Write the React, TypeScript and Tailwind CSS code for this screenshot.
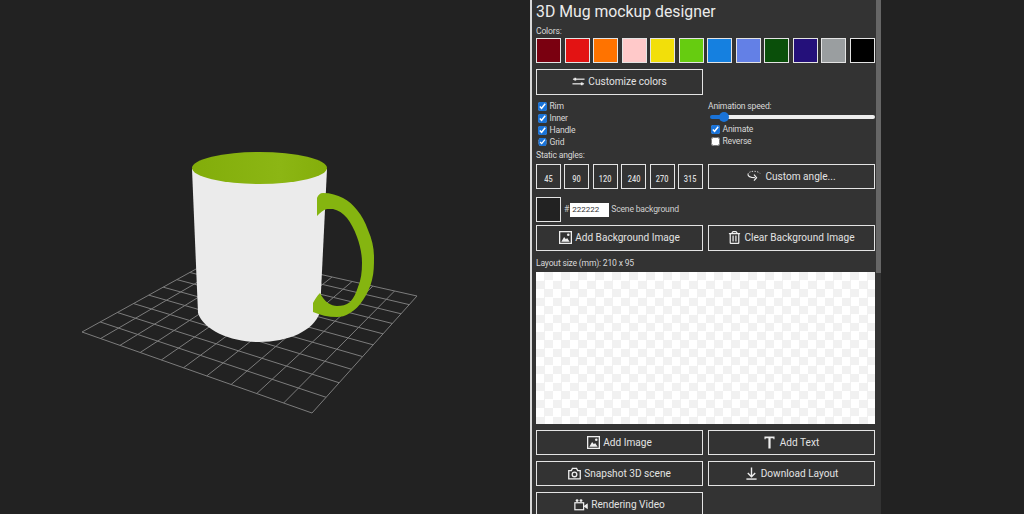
import { FaRegTrashAlt } from 'react-icons/fa';
import type { ReactNode } from 'react';

const swatches = ['#7a0010', '#e31313', '#ff7300', '#ffc9c9', '#f2df0a', '#66cc10', '#1580e0', '#6380e6', '#0a4f0a', '#24107a', '#9a9ea0', '#000000'];
const angles = ['45', '90', '120', '240', '270', '315'];

// back, right, front, left corners of the floor grid
const corners = { tl: [225, 253], tr: [417, 296], br: [312, 413], bl: [82, 332] };

// maps the unit square onto the four corners so the cells shrink with distance
const project = (u: number, v: number) => {
    const { tl, tr, br, bl } = corners;
    const dx1 = tr[0] - br[0];
    const dx2 = bl[0] - br[0];
    const dy1 = tr[1] - br[1];
    const dy2 = bl[1] - br[1];
    const sx = tl[0] - tr[0] + br[0] - bl[0];
    const sy = tl[1] - tr[1] + br[1] - bl[1];
    const det = dx1 * dy2 - dx2 * dy1;
    const g = (sx * dy2 - dx2 * sy) / det;
    const h = (dx1 * sy - sx * dy1) / det;
    const a = tr[0] - tl[0] + g * tr[0];
    const b = bl[0] - tl[0] + h * bl[0];
    const d = tr[1] - tl[1] + g * tr[1];
    const e = bl[1] - tl[1] + h * bl[1];
    const w = g * u + h * v + 1;
    return [(a * u + b * v + tl[0]) / w, (d * u + e * v + tl[1]) / w];
};

const gridLines = Array.from({ length: 11 }, (_, i) => i / 10).flatMap((t) => [
    [project(t, 0), project(t, 1)],
    [project(0, t), project(1, t)],
]);

const Scene = () => (
    <svg viewBox="0 0 530 514" className="block h-[514px] w-[530px] flex-none">
        <defs>
            <linearGradient id="inner" x1="0" x2="1" y1="0" y2="0">
                <stop offset="0" stopColor="#82ad0a" />
                <stop offset="0.65" stopColor="#8cb614" />
                <stop offset="1" stopColor="#84ae0a" />
            </linearGradient>
        </defs>
        {gridLines.map(([p, q], i) => (
            <line key={i} x1={p[0]} y1={p[1]} x2={q[0]} y2={q[1]} stroke="#7c7c7c" strokeWidth="1" />
        ))}
        <path d="M192 169 L198 313 C204 331 232 342 259 342 C288 342 314 331 320 312 L327 169 Z" fill="#ebebeb" />
        <ellipse cx="259.5" cy="168" rx="67.5" ry="16" fill="url(#inner)" />
        <path
            d="M317 198 C318 195 320 193 323 193 C331 193 337 195 343 198 C349 201 353 205 357 210 C362 216 365 222 368 230 C372 239 374 248 374 257 C374 265 374 272 372 280 C370 288 367 294 363 300 C359 306 355 310 350 313 C345 316 341 317 337 317 C328 317 320 315 313 312 L313 303 C315 299 317 296 320 293 C322 297 325 301 328 303 C331 305 334 306 337 306 C342 306 346 305 350 302 C354 298 356 293 358 287 C361 280 362 272 362 263 C362 254 360 245 357 237 C354 229 351 223 347 218 C343 213 338 210 333 209 L327 209 C323 210 320 213 317 216 Z"
            fill="#85b510"
        />
    </svg>
);

const SlidersIcon = () => (
    <svg viewBox="0 0 14 12" className="size-[13px] flex-none" fill="#eeeeee" stroke="#eeeeee" strokeWidth="1.3">
        <path d="M1 3.5H13.5" />
        <rect x="2.5" y="2" width="2" height="3" stroke="none" />
        <path d="M0.5 8.5H13" />
        <rect x="9.5" y="7" width="2" height="3" stroke="none" />
    </svg>
);

const ImageIcon = () => (
    <svg viewBox="0 0 14 14" className="size-[13px] flex-none" fill="none" stroke="#eeeeee" strokeWidth="1.4">
        <rect x="0.7" y="0.7" width="12.6" height="12.6" />
        <path d="M2.5 11.5L5.5 6.5L7.5 9L8.7 7.5L11.5 11.5Z" fill="#eeeeee" stroke="none" />
        <circle cx="10" cy="4" r="1.4" fill="#eeeeee" stroke="none" />
    </svg>
);

const AngleIcon = () => (
    <svg viewBox="0 0 16 14" className="h-[12px] w-[14px] flex-none" fill="none" stroke="#eeeeee" strokeWidth="1.4">
        <path d="M1 5C1 3 4 1.5 8 1.5C11 1.5 14 2.5 15 4" strokeDasharray="1.5 1.5" strokeWidth="1" />
        <path d="M1 5C1 7.5 4 9 9 9" />
        <path d="M8 5.5L11 9L8 12.5" />
    </svg>
);

const TextIcon = () => (
    <svg viewBox="0 0 12 14" className="h-[13px] w-[11px] flex-none" fill="#eeeeee">
        <path d="M0.5 0.5H11.5V3.5H10.2V2.3H7.2V13.5H4.8V2.3H1.8V3.5H0.5Z" />
    </svg>
);

const CameraIcon = () => (
    <svg viewBox="0 0 14 14" className="size-[13px] flex-none" fill="none" stroke="#eeeeee" strokeWidth="1.4">
        <path d="M0.8 3.8H3.6L4.8 1.5H9.2L10.4 3.8H13.2V12.7H0.8Z" />
        <circle cx="7" cy="8" r="2.5" />
    </svg>
);

const DownloadIcon = () => (
    <svg viewBox="0 0 14 14" className="size-[13px] flex-none" fill="none" stroke="#eeeeee" strokeWidth="1.5">
        <path d="M7 0.5V10M3 6.5L7 10.5L11 6.5" />
        <path d="M1.5 13H12.5" />
    </svg>
);

const VideoIcon = () => (
    <svg viewBox="0 0 16 14" className="h-[13px] w-[14px] flex-none" fill="none" stroke="#eeeeee" strokeWidth="1.4">
        <rect x="1" y="5" width="10" height="8" />
        <circle cx="3.5" cy="2.5" r="1.6" fill="#eeeeee" stroke="none" />
        <circle cx="8" cy="2.5" r="1.6" fill="#eeeeee" stroke="none" />
        <path d="M12 9L15 7V11Z" fill="#eeeeee" />
    </svg>
);

const Btn = ({ icon, label, className = 'w-[167px]' }: { icon: ReactNode; label: string; className?: string }) => (
    <button className={`flex h-[25.5px] flex-none items-center justify-center gap-[3px] border-[1.5px] border-[#e4e4e4] text-[10.1px] text-[#e2e2e2] ${className}`}>
        {icon}
        <span>{label}</span>
    </button>
);

const Check = ({ label, checked = true }: { label: string; checked?: boolean }) => (
    <label className="flex h-[12px] items-center gap-[3px] pl-[2px] text-[8.6px] tracking-[-0.2px] text-[#d8d8d8]">
        <input type="checkbox" defaultChecked={checked} className="m-0 size-[8.5px] accent-[#1a73d8]" />
        {label}
    </label>
);

export default function App() {
    return (
        <div className="flex h-[514px] w-[1024px] overflow-hidden bg-[#222222] font-['Roboto',sans-serif]">
            <Scene />
            <div className="h-[514px] w-[1.5px] flex-none bg-[#d8d8d8]" />
            <div className="flex h-[514px] w-[349.5px] flex-none bg-[#333333]">
                <main className="flex w-[344.5px] flex-none flex-col overflow-hidden pl-[4.5px]">
                    <h1 className="mt-[3px] text-[15.8px] leading-[18px] text-[#ebebeb]">3D Mug mockup designer</h1>
                    <p className="mt-[4px] text-[8.6px] leading-[12px] tracking-[-0.2px] text-[#d8d8d8]">Colors:</p>
                    <div className="mt-[1px] flex w-[339px] justify-between">
                        {swatches.map((c) => (
                            <div key={c} className="h-[25px] w-[25px] border-[1.5px] border-[#e4e4e4]" style={{ backgroundColor: c }} />
                        ))}
                    </div>
                    <Btn icon={<SlidersIcon />} label="Customize colors" className="mt-[6px] w-[167px]" />

                    <div className="mt-[5px] flex h-[48px] w-[339px] gap-[5px]">
                        <div className="flex w-[167px] flex-col pt-[1px]">
                            <Check label="Rim" />
                            <Check label="Inner" />
                            <Check label="Handle" />
                            <div className="-mt-[0.5px]">
                                <Check label="Grid" />
                            </div>
                        </div>
                        <div className="flex w-[167px] flex-col">
                            <p className="text-[8.6px] leading-[12px] tracking-[-0.2px] text-[#d8d8d8]">Animation speed:</p>
                            <div className="mt-[1px] flex h-[8px] items-center pl-[2px]">
                                <div className="h-[4px] w-[10px] rounded-l-full bg-[#1a73d8]" />
                                <div className="z-10 -mx-[1px] size-[10px] rounded-full bg-[#1a73d8]" />
                                <div className="h-[4px] flex-1 rounded-r-full bg-[#eeeeee]" />
                            </div>
                            <div className="mt-[3px] pl-[1px]">
                                <Check label="Animate" />
                                <Check label="Reverse" checked={false} />
                            </div>
                        </div>
                    </div>

                    <p className="mt-[1px] text-[8.6px] leading-[12px] tracking-[-0.2px] text-[#d8d8d8]">Static angles:</p>
                    <div className="mt-[3px] flex w-[339px] gap-[5px]">
                        <div className="flex w-[167px] justify-between">
                            {angles.map((a) => (
                                <button key={a} className="h-[25.5px] w-[25px] border-[1.5px] border-[#e4e4e4] text-[#dcdcdc]">
                                    <span className="inline-block scale-x-[0.78] text-[9.5px] font-medium">{a}</span>
                                </button>
                            ))}
                        </div>
                        <Btn icon={<AngleIcon />} label="Custom angle..." className="w-[167px] gap-[4px]" />
                    </div>

                    <div className="mt-[8px] flex h-[25px] items-center">
                        <div className="h-[25px] w-[25px] border-[1.5px] border-[#e4e4e4] bg-[#222222]" />
                        <span className="ml-[3px] text-[8.6px] text-[#c8c8c8]">#</span>
                        <input readOnly value="222222" className="ml-[1px] h-[14px] w-[39px] bg-white pl-[2px] text-[8px] text-[#333333] outline-none" />
                        <span className="ml-[2px] text-[8.6px] tracking-[-0.2px] text-[#d0d0d0]">Scene background</span>
                    </div>

                    <div className="mt-[3px] flex w-[339px] gap-[5px]">
                        <Btn icon={<ImageIcon />} label="Add Background Image" />
                        <Btn icon={<FaRegTrashAlt size={13} color="#eeeeee" />} label="Clear Background Image" />
                    </div>

                    <p className="mt-[6px] text-[8.6px] leading-[12px] tracking-[-0.2px] text-[#d8d8d8]">Layout size (mm): 210 x 95</p>
                    <div className="mt-[3px] h-[152px] w-[339px] flex-none bg-[conic-gradient(#f1f1f1_25%,#ffffff_0_50%,#f1f1f1_0_75%,#ffffff_0)] bg-[length:17px_17px]" />

                    <div className="mt-[6px] flex w-[339px] gap-[5px]">
                        <Btn icon={<ImageIcon />} label="Add Image" />
                        <Btn icon={<TextIcon />} label="Add Text" className="w-[167px] gap-[5px]" />
                    </div>
                    <div className="mt-[5.5px] flex w-[339px] gap-[5px]">
                        <Btn icon={<CameraIcon />} label="Snapshot 3D scene" />
                        <Btn icon={<DownloadIcon />} label="Download Layout" />
                    </div>
                    <div className="mt-[5.5px] flex">
                        <Btn icon={<VideoIcon />} label="Rendering Video" />
                    </div>
                </main>
                <div className="h-[273px] w-[5px] flex-none bg-[#666666]" />
            </div>
        </div>
    );
}
